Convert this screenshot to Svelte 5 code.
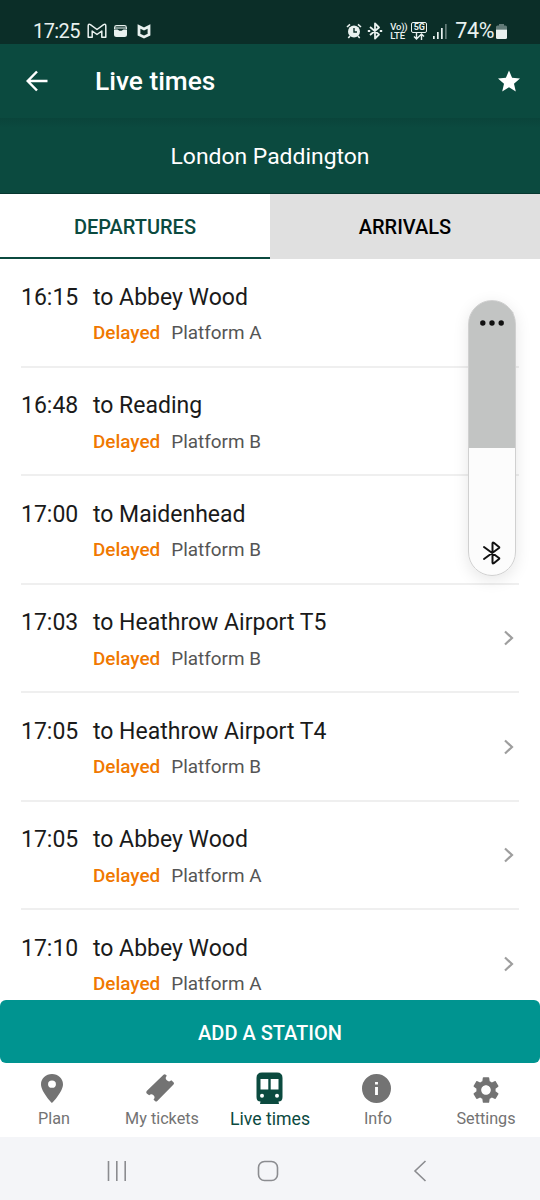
<script lang="ts">
	interface Departure {
		time: string;
		destination: string;
		status: string;
		platform: string;
	}

	const departures: Departure[] = [
		{ time: '16:15', destination: 'Abbey Wood', status: 'Delayed', platform: 'A' },
		{ time: '16:48', destination: 'Reading', status: 'Delayed', platform: 'B' },
		{ time: '17:00', destination: 'Maidenhead', status: 'Delayed', platform: 'B' },
		{ time: '17:03', destination: 'Heathrow Airport T5', status: 'Delayed', platform: 'B' },
		{ time: '17:05', destination: 'Heathrow Airport T4', status: 'Delayed', platform: 'B' },
		{ time: '17:05', destination: 'Abbey Wood', status: 'Delayed', platform: 'A' },
		{ time: '17:10', destination: 'Abbey Wood', status: 'Delayed', platform: 'A' }
	];

	const tabs = ['Plan', 'My tickets', 'Live times', 'Info', 'Settings'];

	let board = $state('departures');
	let activeTab = $state('Live times');
</script>

<div class="screen">
	<div class="status-bar">
		<span class="clock">17:25</span>
		<svg class="gmail" width="20" height="16" viewBox="0 0 20 16" fill="none" stroke="currentColor" stroke-width="1.5" stroke-linejoin="round">
			<path d="M1.200 14.200V3Q1.200.6 3.400 1.600L10 6.500l6.600-4.900Q18.800.6 18.800 3v11.200h-4V8L10 11.500 5.200 8v6.200z" />
		</svg>
		<svg class="wallet" width="13" height="12" viewBox="0 0 13 12">
			<path d="M.6 4V2.500a2 2 0 0 1 2-1.900h7.800a2 2 0 0 1 2 1.900V4" fill="none" stroke="currentColor" stroke-width="1.100" />
			<path d="M1 3h11" stroke="currentColor" />
			<path d="M0 4.600h3.500l2 1.200h2l2-1.200H13V9.500A2.500 2.500 0 0 1 10.500 12h-8A2.500 2.500 0 0 1 0 9.500z" fill="currentColor" />
		</svg>
		<svg class="shield" width="14" height="15" viewBox="0 0 14 15" fill="none" stroke="currentColor" stroke-width="2.800">
			<path d="M2 2.500L7 5l5-2.500v8.200L7 13 2 10.700z" />
		</svg>
		<span class="spacer"></span>
		<svg class="alarm" width="16" height="16" viewBox="0 0 16 16">
			<circle cx="8" cy="8.500" r="6" fill="currentColor" />
			<path d="M1 4l3-2.700M15 4l-3-2.700M4 13l-1.700 2M12 13l1.700 2" stroke="currentColor" stroke-width="1.600" />
			<path d="M8 5v4h3" fill="none" stroke="#0b2e28" stroke-width="1.400" />
		</svg>
		<svg class="bt" width="16" height="18" viewBox="0 0 16 18" fill="none" stroke="currentColor" stroke-width="1.800" stroke-linejoin="round">
			<path d="M3 5l9 7.500L8 16.500v-15L12 5.500 3 13" />
			<path d="M.8 9h2.400M12.800 9h2.400" />
		</svg>
		<span class="volte"><span>Vo))</span><span>LTE</span></span>
		<span class="network">
			<span class="five-g">5G</span>
			<svg width="12" height="7" viewBox="0 0 12 7" fill="none" stroke="currentColor" stroke-width="1.400">
				<path d="M3.500 0v6M1 3.500L3.500 6 6 3.500M8.500 7V1M6 3.500L8.500 1 11 3.500" />
			</svg>
		</span>
		<svg class="signal" width="14" height="15" viewBox="0 0 14 15" fill="currentColor">
			<rect y="12" width="1.700" height="3" />
			<rect x="4" y="8" width="1.700" height="7" />
			<rect x="8" y="4" width="1.700" height="11" />
			<rect x="12" width="1.700" height="15" opacity=".4" />
		</svg>
		<span class="percent">74%</span>
		<svg class="battery" width="11" height="15" viewBox="0 0 11 15" fill="currentColor">
			<path d="M3 0h5v1.500h1.500A1.500 1.500 0 0 1 11 3v2.500H0V3a1.500 1.500 0 0 1 1.500-1.500H3z" opacity=".4" />
			<path d="M0 5.500h11v8a1.500 1.500 0 0 1-1.500 1.500h-8A1.500 1.500 0 0 1 0 13.500z" />
		</svg>
	</div>

	<header class="app-bar">
		<svg class="back" width="22" height="22" viewBox="0 0 22 22" fill="none" stroke="currentColor" stroke-width="2.500">
			<path d="M21.500 11H2M11 1.500L1.700 11l9.300 9.500" />
		</svg>
		<h1>Live times</h1>
		<svg class="star" width="22" height="22" viewBox="2 2 20 19" fill="currentColor">
			<path d="M12 17.270L18.180 21l-1.640-7.030L22 9.240l-7.190-.61L12 2 9.190 8.630 2 9.240l5.460 4.730L5.820 21z" />
		</svg>
	</header>
	<div class="station">London Paddington</div>

	<div class="board-tabs">
		<button class:active={board === 'departures'} onclick={() => (board = 'departures')}>DEPARTURES</button>
		<button class:active={board === 'arrivals'} onclick={() => (board = 'arrivals')}>ARRIVALS</button>
	</div>

	<main class="list">
		{#each departures as dep}
			<div class="row">
				<span class="time">{dep.time}</span>
				<div class="info">
					<p class="destination">to {dep.destination}</p>
					<p class="details"><span class="delayed">{dep.status}</span><span>Platform {dep.platform}</span></p>
				</div>
				<svg class="chevron" width="12" height="16" viewBox="0 0 12 16" fill="none" stroke="currentColor" stroke-width="2.200">
					<path d="M2 1.500L9 8l-7 6.500" />
				</svg>
			</div>
		{/each}
	</main>

	<button class="add">ADD A STATION</button>

	<nav class="bottom-nav">
		{#each tabs as tab}
			<button class:active={activeTab === tab} onclick={() => (activeTab = tab)}>
				<span class="icon">
					{#if tab === 'Plan'}
						<svg class="shifted" width="22" height="29" viewBox="5 2 14 20" preserveAspectRatio="none" fill="currentColor">
							<path d="M12 2C8.130 2 5 5.130 5 9c0 5.250 7 13 7 13s7-7.750 7-13c0-3.870-3.130-7-7-7zm0 9.500a2.500 2.500 0 1 1 0-5 2.500 2.500 0 0 1 0 5z" />
						</svg>
					{:else if tab === 'My tickets'}
						<svg class="shifted" width="30" height="30" viewBox="0 0 30 30" fill="currentColor">
							<path d="M18.500 1.700q1.200-1 2.300 0l1 1.100a2.600 2.600 0 0 0 4.500 4.500l2.200 2q1.100 1.100 0 2.200L12.300 28q-1.200 1-2.300 0l-1.500-1.500a2.600 2.600 0 0 0-4.300-4.300l-2.500-1.800q-1-1.200 0-2.300z" />
						</svg>
					{:else if tab === 'Live times'}
						<svg class="train" width="27" height="33" viewBox="0 0 27 33">
							<path d="M6 .5h15q5.500 0 5.500 5.500v19q0 4.500-4 4.500l.5 2.500h-19l.5-2.500q-4 0-4-4.500V6Q.5.5 6 .5z" fill="currentColor" />
							<path d="M4.500 7h7.800v10.500H4.500zM14.700 7h7.800v10.500h-7.800z" fill="#fff" />
							<circle cx="6" cy="23.700" r="2" fill="#fff" />
							<circle cx="21" cy="23.700" r="2" fill="#fff" />
						</svg>
					{:else if tab === 'Info'}
						<svg class="shifted" width="29" height="29" viewBox="2 2 20 20" fill="currentColor">
							<path d="M12 2a10 10 0 1 0 0 20 10 10 0 0 0 0-20zm1 14.500h-2v-5.500h2v5.500zm0-7.200h-2V7.500h2v1.800z" />
						</svg>
					{:else}
						<svg class="gear" width="32" height="32" viewBox="0 0 24 24" fill="currentColor">
							<path d="M19.140 12.940c.04-.3.060-.61.060-.94 0-.32-.02-.64-.07-.94l2.030-1.580c.18-.14.23-.41.120-.61l-1.920-3.320c-.12-.22-.37-.29-.59-.22l-2.390.96c-.5-.38-1.030-.7-1.620-.94l-.36-2.540c-.04-.24-.24-.41-.48-.41h-3.840c-.24 0-.43.17-.47.41l-.36 2.540c-.59.24-1.130.57-1.620.94l-2.390-.96c-.22-.08-.47 0-.59.22L2.740 8.870c-.12.21-.08.470.12.610l2.030 1.580c-.05.3-.09.63-.09.940s.02.640.07.940l-2.030 1.580c-.18.140-.23.410-.12.610l1.920 3.320c.12.220.37.290.59.220l2.390-.96c.5.380 1.030.7 1.620.94l.36 2.540c.05.240.24.410.48.410h3.840c.24 0 .44-.17.47-.41l.36-2.540c.59-.24 1.130-.56 1.620-.94l2.390.96c.22.080.47 0 .59-.22l1.920-3.320c.12-.22.070-.47-.12-.61l-2.010-1.580zM12 15.600c-1.980 0-3.600-1.620-3.600-3.600s1.620-3.600 3.600-3.600 3.600 1.620 3.600 3.600-1.620 3.600-3.600 3.600z" />
						</svg>
					{/if}
				</span>
				<span>{tab}</span>
			</button>
		{/each}
	</nav>

	<div class="system-nav">
		<svg width="20" height="22" viewBox="0 0 20 22" stroke="currentColor" stroke-width="1.600">
			<path d="M1.500 1v20M9.800 1v20M18.200 1v20" />
		</svg>
		<svg width="22" height="22" viewBox="0 0 22 22" fill="none" stroke="currentColor" stroke-width="1.600">
			<rect x="1.500" y="1.500" width="19" height="19" rx="6" />
		</svg>
		<svg width="14" height="22" viewBox="0 0 14 22" fill="none" stroke="currentColor" stroke-width="1.600">
			<path d="M12.500 1L2 11l10.500 10" />
		</svg>
	</div>

	<!-- volume slider floating over the list -->
	<div class="volume">
		<svg class="dots" width="26" height="6" viewBox="0 0 26 6" fill="#111">
			<circle cx="3.800" cy="3" r="2.700" />
			<circle cx="13" cy="3" r="2.700" />
			<circle cx="22.200" cy="3" r="2.700" />
		</svg>
		<svg width="20" height="24" viewBox="0 0 20 24" fill="none" stroke="#111" stroke-width="2" stroke-linejoin="round" stroke-linecap="round">
			<path d="M2 6l15 11q.6.500 0 1l-5.200 4.200q-1.300.8-1.300-.7v-19q0-1.500 1.300-.7L17 6q.6.500 0 1L2 18" />
		</svg>
	</div>
</div>

<style>
	:global(body) {
		margin: 0;
	}

	.screen {
		position: relative;
		display: flex;
		flex-direction: column;
		width: 540px;
		height: 1200px;
		overflow: hidden;
		background: #fff;
		font-family: Roboto, sans-serif;
	}

	button {
		border: 0;
		padding: 0;
		background: none;
		font: inherit;
	}

	svg {
		display: block;
		flex-shrink: 0;
	}

	.status-bar {
		display: flex;
		align-items: center;
		box-sizing: border-box;
		height: 44px;
		padding: 18px 33px 0 33px;
		background: #0b2e28;
		color: #e9f1ef;
	}

	.clock,
	.percent {
		font-size: 20px;
		line-height: 24px;
	}

	.clock {
		letter-spacing: -0.6px;
	}

	.gmail {
		margin-left: 7px;
	}

	.wallet {
		margin-left: 7px;
	}

	.shield {
		margin-left: 10px;
	}

	.spacer {
		flex: 1;
	}

	.alarm {
		margin-right: 5px;
	}

	.volte {
		display: flex;
		flex-direction: column;
		width: 17px;
		margin-left: 7px;
		font-size: 9.500px;
		font-weight: 500;
		letter-spacing: -0.2px;
		line-height: 9px;
	}

	.network {
		display: flex;
		flex-direction: column;
		align-items: center;
		margin-left: 4px;
	}

	.five-g {
		box-sizing: border-box;
		width: 16px;
		height: 11px;
		border: 1px solid currentColor;
		border-radius: 2px;
		font-size: 9px;
		font-weight: 700;
		line-height: 9px;
		text-align: center;
	}

	.signal {
		margin-left: 6px;
	}

	.percent {
		margin-left: 8px;
		font-size: 21.500px;
		letter-spacing: -0.4px;
	}

	.battery {
		margin-left: 2px;
	}

	.app-bar {
		display: flex;
		align-items: center;
		box-sizing: border-box;
		height: 74px;
		padding: 0 20px 0 26px;
		background: #0b4a3f;
		color: #fff;
	}

	h1 {
		flex: 1;
		margin: 0 0 0 47px;
		font-size: 26.300px;
		font-weight: 500;
	}

	.station {
		box-sizing: border-box;
		height: 76px;
		border-bottom: 1px solid #06372f;
		background: linear-gradient(#0a443a, #0b4a3f 10px);
		color: #fff;
		font-size: 22.900px;
		line-height: 77px;
		text-align: center;
	}

	.board-tabs {
		display: flex;
		height: 65px;
	}

	.board-tabs button {
		flex: 1;
		padding-top: 3px;
		border-bottom: 2px solid #e0e0e0;
		background: #e0e0e0;
		color: #000;
		font-size: 20px;
		font-weight: 500;
		line-height: 60px;
	}

	.board-tabs .active {
		border-color: #0b4a3f;
		background: #fff;
		color: #0b4a3f;
	}

	.list {
		flex: 1;
		min-height: 0;
		overflow: hidden;
		padding: 0 21px;
	}

	.row {
		display: flex;
		box-sizing: border-box;
		height: 108.500px;
		border-bottom: 2px solid #efefef;
	}

	.time,
	.destination {
		margin: 0;
		color: #1a1a1a;
		font-size: 23px;
		line-height: 28px;
	}

	.time {
		width: 72px;
		padding-top: 24.500px;
	}

	.info {
		flex: 1;
		padding-top: 24.500px;
	}

	.details {
		display: flex;
		gap: 11px;
		margin: 9.500px 0 0;
		color: #555;
		font-size: 18.900px;
		line-height: 24px;
	}

	.delayed {
		color: #f07800;
		font-weight: 500;
	}

	.chevron {
		align-self: center;
		margin: 1px 4px 0 0;
		color: #9e9e9e;
	}

	.add {
		height: 63px;
		padding-top: 3px;
		border-radius: 6px;
		background: #009490;
		color: #fff;
		font-size: 20px;
		font-weight: 500;
	}

	.bottom-nav {
		display: grid;
		grid-template-columns: repeat(5, 1fr);
		height: 74px;
	}

	.bottom-nav button {
		display: flex;
		flex-direction: column;
		align-items: center;
		color: #737373;
		font-size: 16.200px;
		line-height: 20px;
		white-space: nowrap;
	}

	.bottom-nav .active {
		color: #0b4a3f;
		font-size: 17.700px;
	}

	.icon {
		display: flex;
		align-items: center;
		justify-content: center;
		height: 34px;
		padding: 8px 0 4px;
	}

	.shifted {
		margin-right: 4px;
	}

	.train {
		margin-right: 1px;
	}

	.gear {
		margin-top: 3px;
	}

	.system-nav {
		display: grid;
		grid-template-columns: repeat(3, 151.500px);
		align-items: center;
		justify-items: center;
		box-sizing: border-box;
		height: 63px;
		padding: 4px 0 0 41px;
		background: #f4f5f8;
		color: #8b8c90;
	}

	.volume {
		position: absolute;
		top: 300px;
		left: 468px;
		display: flex;
		flex-direction: column;
		align-items: center;
		justify-content: space-between;
		box-sizing: border-box;
		width: 48px;
		height: 276px;
		padding: 19px 0 10px;
		border: 1px solid #d0d0d0;
		border-radius: 24px;
		background: linear-gradient(#c2c4c3 147px, #fcfcfc 147px);
		box-shadow: 0 4px 16px rgba(0, 0, 0, 0.1);
	}
</style>
